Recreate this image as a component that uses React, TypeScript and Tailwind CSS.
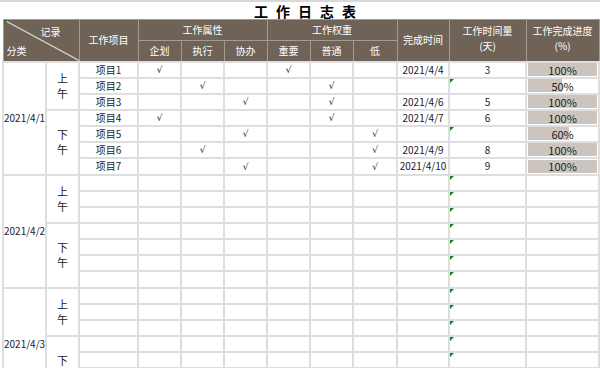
import React from 'react';

type Row = {
  name?: string;
  mark?: [number, number];
  done?: string;
  hours?: string;
  pct?: number;
};

const cols = [43, 33, 59, 43, 43, 43, 43, 43, 44, 52, 77, 73];

const day1: Row[] = [
  { name: '项目1', mark: [0, 0], done: '2021/4/4', hours: '3', pct: 100 },
  { name: '项目2', mark: [1, 1], pct: 50 },
  { name: '项目3', mark: [2, 1], done: '2021/4/6', hours: '5', pct: 100 },
  { name: '项目4', mark: [0, 1], done: '2021/4/7', hours: '6', pct: 100 },
  { name: '项目5', mark: [2, 2], pct: 60 },
  { name: '项目6', mark: [1, 2], done: '2021/4/9', hours: '8', pct: 100 },
  { name: '项目7', mark: [2, 2], done: '2021/4/10', hours: '9', pct: 100 },
];

const empty: Row[] = Array.from({ length: 7 }, () => ({}));

const groups = [
  { date: '2021/4/1', rows: day1 },
  { date: '2021/4/2', rows: empty },
  { date: '2021/4/3', rows: empty },
];

const td = 'border-2 border-[#dedede] p-0 text-center align-middle';
const th = 'border border-[#a39a91] p-0 text-center align-middle font-normal text-white';

function Flag() {
  return (
    <span className="absolute left-0 top-0 h-0 w-0 border-t-[4px] border-r-[4px] border-t-[#1d7a1d] border-r-transparent" />
  );
}

function Check({ on }: { on: boolean }) {
  if (!on) return null;
  return <span className="font-['DejaVu_Sans',sans-serif] text-[9px]">√</span>;
}

function HalfDay({ label }: { label: string }) {
  return (
    <div className="flex flex-col items-center leading-[15px] text-[11px]">
      <span>{label[0]}</span>
      <span>{label[1]}</span>
    </div>
  );
}

export default function App() {
  return (
    <div className="h-[368px] w-[600px] overflow-hidden border-t-2 border-[#d8d8d8] bg-white font-['Noto_Sans_CJK_SC',sans-serif] text-[10px] text-[#222]">
      <div className="flex h-[17px] items-center justify-center pl-[18px] text-[14px] font-bold leading-none tracking-[8px] text-black">
        工作日志表
      </div>
      <table className="ml-[2px] w-[596px] table-fixed border-collapse">
        <colgroup>
          {cols.map((w, i) => (
            <col key={i} style={{ width: w }} />
          ))}
        </colgroup>
        <thead className="bg-[#6f6358] leading-[12px]">
          <tr className="h-[21px]">
            <th colSpan={2} rowSpan={2} className={`${th} relative`}>
              <svg className="absolute inset-0 h-full w-full" preserveAspectRatio="none" viewBox="0 0 100 100">
                <line x1="0" y1="0" x2="100" y2="100" stroke="#d9d3cc" strokeWidth="1.2" vectorEffect="non-scaling-stroke" />
              </svg>
              <Flag />
              <span className="absolute right-[18px] top-[6px]">记录</span>
              <span className="absolute bottom-[4px] left-[3px]">分类</span>
            </th>
            <th rowSpan={2} className={th}>工作项目</th>
            <th colSpan={3} className={th}>工作属性</th>
            <th colSpan={3} className={th}>工作权重</th>
            <th rowSpan={2} className={th}>完成时间</th>
            <th rowSpan={2} className={th}>
              工作时间量
              <br />
              <span className="leading-[18px]">(天)</span>
            </th>
            <th rowSpan={2} className={th}>
              工作完成进度
              <br />
              <span className="leading-[18px]">(%)</span>
            </th>
          </tr>
          <tr className="h-[21px]">
            {['企划', '执行', '协办', '重要', '普通', '低'].map((t) => (
              <th key={t} className={th}>
                {t}
              </th>
            ))}
          </tr>
        </thead>
        <tbody className="leading-[12px]">
          {groups.map((g) =>
            g.rows.map((r, i) => (
              <tr key={`${g.date}-${i}`} className={i === 6 ? 'h-[17px]' : 'h-[16px]'}>
                {i === 0 && (
                  <td rowSpan={7} className={`${td} text-[10px]`}>
                    {g.date}
                  </td>
                )}
                {i === 0 && (
                  <td rowSpan={3} className={td}>
                    <HalfDay label="上午" />
                  </td>
                )}
                {i === 3 && (
                  <td rowSpan={4} className={td}>
                    <HalfDay label="下午" />
                  </td>
                )}
                <td className={td}>{r.name}</td>
                {[0, 1, 2].map((k) => (
                  <td key={`a${k}`} className={td}>
                    <Check on={!!r.mark && r.mark[0] === k} />
                  </td>
                ))}
                {[0, 1, 2].map((k) => (
                  <td key={`b${k}`} className={td}>
                    <Check on={!!r.mark && r.mark[1] === k} />
                  </td>
                ))}
                <td className={td}>{r.done}</td>
                <td className={`${td} relative`}>
                  {!r.done && <Flag />}
                  {r.hours}
                </td>
                <td className={`${td} px-[1px]`}>
                  {r.pct !== undefined && (
                    <div
                      className="flex h-[13px] items-center justify-center text-[11px]"
                      style={{
                        background: `linear-gradient(to right, #ccc5bf ${r.pct}%, transparent ${r.pct}%)`,
                      }}
                    >
                      {r.pct}%
                    </div>
                  )}
                </td>
              </tr>
            ))
          )}
        </tbody>
      </table>
    </div>
  );
}
